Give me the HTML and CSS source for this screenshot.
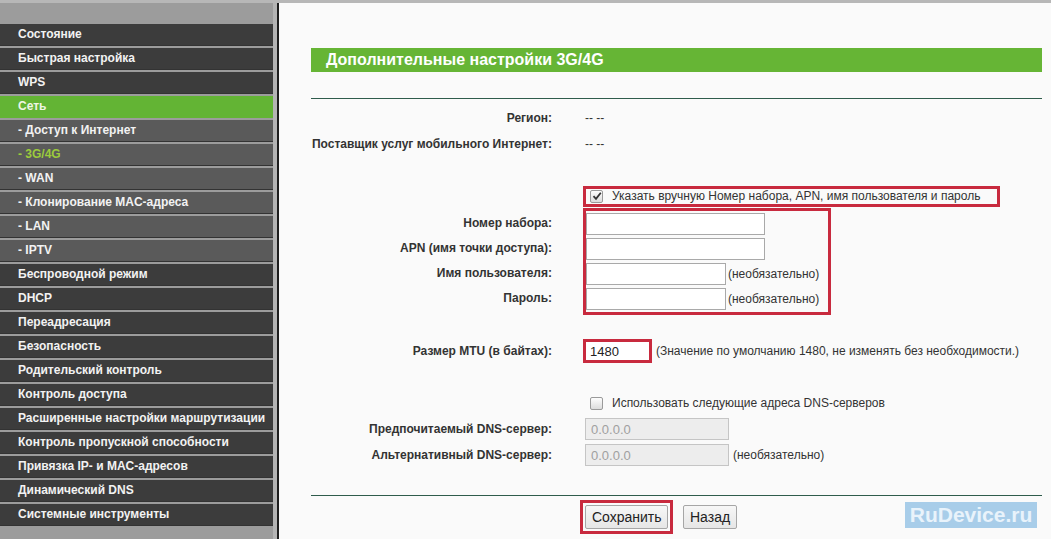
FILE: index.html
```html
<!DOCTYPE html>
<html lang="ru">
<head>
    <meta charset="UTF-8">
    <title>Дополнительные настройки 3G/4G</title>
    <link rel="stylesheet" href="styles.css">
</head>
<body>
    <div class="page">
        <nav class="menu">
            <a class="item">Состояние</a>
            <a class="item">Быстрая настройка</a>
            <a class="item">WPS</a>
            <a class="item active">Сеть</a>
            <a class="item sub">- Доступ к Интернет</a>
            <a class="item sub current">- 3G/4G</a>
            <a class="item sub">- WAN</a>
            <a class="item sub">- Клонирование MAC-адреса</a>
            <a class="item sub">- LAN</a>
            <a class="item sub">- IPTV</a>
            <a class="item">Беспроводной режим</a>
            <a class="item">DHCP</a>
            <a class="item">Переадресация</a>
            <a class="item">Безопасность</a>
            <a class="item">Родительский контроль</a>
            <a class="item">Контроль доступа</a>
            <a class="item">Расширенные настройки маршрутизации</a>
            <a class="item">Контроль пропускной способности</a>
            <a class="item">Привязка IP- и MAC-адресов</a>
            <a class="item">Динамический DNS</a>
            <a class="item">Системные инструменты</a>
        </nav>

        <main class="content">
            <h1 class="title">Дополнительные настройки 3G/4G</h1>
            <div class="rule"></div>

            <div class="row">
                <span class="label">Регион:</span>
                <span class="value">-- --</span>
            </div>
            <div class="row">
                <span class="label">Поставщик услуг мобильного Интернет:</span>
                <span class="value">-- --</span>
            </div>

            <div class="row spaced">
                <span class="label"></span>
                <span class="value">
                    <span class="mark check-mark">
                        <span class="box checked">
                            <svg width="10" height="10" viewBox="0 0 10 10"><path d="M1.5 5.2 L4 7.8 L8.8 1.8" fill="none" stroke="#333" stroke-width="1.8"/></svg>
                        </span>
                        Указать вручную Номер набора, APN, имя пользователя и пароль
                    </span>
                </span>
            </div>

            <div class="group">
                <div class="labels">
                    <span class="label">Номер набора:</span>
                    <span class="label">APN (имя точки доступа):</span>
                    <span class="label">Имя пользователя:</span>
                    <span class="label">Пароль:</span>
                </div>
                <div class="mark fields">
                    <div class="field"><input class="text wide" type="text"></div>
                    <div class="field"><input class="text wide" type="text"></div>
                    <div class="field"><input class="text" type="text"><span class="note">(необязательно)</span></div>
                    <div class="field"><input class="text" type="password"><span class="note">(необязательно)</span></div>
                </div>
            </div>

            <div class="row mtu">
                <span class="label">Размер MTU (в байтах):</span>
                <span class="value">
                    <input class="text mtu-input" type="text" value="1480">
                    <span class="note">(Значение по умолчанию 1480, не изменять без необходимости.)</span>
                </span>
            </div>

            <div class="row dns">
                <span class="label"></span>
                <span class="value"><span class="box"></span>Использовать следующие адреса DNS-серверов</span>
            </div>
            <div class="row">
                <span class="label">Предпочитаемый DNS-сервер:</span>
                <span class="value"><input class="text dns-input" type="text" value="0.0.0.0" disabled></span>
            </div>
            <div class="row">
                <span class="label">Альтернативный DNS-сервер:</span>
                <span class="value"><input class="text dns-input" type="text" value="0.0.0.0" disabled><span class="note">(необязательно)</span></span>
            </div>

            <div class="rule bottom"></div>

            <div class="buttons">
                <span class="save-mark"><button class="btn save">Сохранить</button></span>
                <button class="btn">Назад</button>
            </div>

            <div class="watermark">RuDevice.ru</div>
        </main>
    </div>
</body>
</html>
```

FILE: styles.css
```css
body {
    margin: 0;
    border-top: 3px solid #b7b7b7;
    background: #fafafa;
    font-family: "Liberation Sans", Arial, sans-serif;
    font-size: 12px;
    color: #333;
}
.page {
    display: flex;
    height: 536px;
    overflow: hidden;
}
.menu {
    width: 273px;
    flex-shrink: 0;
    background: #9c9c9c;
    border-right: 4px solid #b4b4b4;
    padding-top: 21px;
    display: flex;
    flex-direction: column;
}
.item {
    height: 21px;
    line-height: 21px;
    margin-bottom: 2px;
    border-bottom: 1px solid #333;
    padding-left: 18px;
    background: #3c3c3c;
    color: #f2f2f2;
    font-weight: bold;
    white-space: nowrap;
}
.item.sub {
    background: #5a5a5a;
}
.item.active {
    background: #63b434;
    border-bottom-color: #63b434;
    color: #eef6e4;
}
.item.current {
    color: #9ccb3c;
}
.content {
    flex: 1;
    position: relative;
    border-left: 2px solid #1e1e1e;
    padding: 45px 9px 0 32px;
}
.title {
    margin: 0;
    height: 24px;
    line-height: 24px;
    padding-left: 15px;
    background: #66b535;
    color: #fff;
    font-size: 16px;
    font-weight: bold;
}
.rule {
    margin-top: 26px;
    border-top: 1px solid #2f5c4c;
    margin-bottom: 6px;
}
.rule.bottom {
    margin-top: 27px;
    margin-bottom: 4px;
}
.row {
    display: grid;
    grid-template-columns: 241px 1fr;
    column-gap: 33px;
    align-items: center;
    height: 26px;
}
.label {
    text-align: right;
    font-weight: bold;
    white-space: nowrap;
}
.value {
    display: flex;
    align-items: center;
    white-space: nowrap;
}
.row.spaced {
    margin-top: 26px;
}
.mark {
    border: 3px solid #c82a3e;
}
.check-mark {
    display: flex;
    align-items: center;
    margin-left: -2px;
    height: 15px;
    padding: 0 11px 0 4px;
    width: 396px;
}
.box {
    display: inline-flex;
    align-items: center;
    justify-content: center;
    width: 11px;
    height: 11px;
    margin-right: 9px;
    border: 1px solid #9a9a9a;
    border-radius: 2px;
    background: linear-gradient(#fdfdfd, #dcdcdc);
}
.dns .box {
    margin-left: 5px;
}
.group {
    display: grid;
    grid-template-columns: 241px auto;
    column-gap: 31px;
    margin-top: -1px;
    justify-content: start;
}
.labels {
    display: flex;
    flex-direction: column;
    padding-top: 3px;
}
.labels .label {
    height: 25px;
    line-height: 25px;
}
.fields {
    width: 242px;
    padding: 0 0 1px 0;
}
.field {
    display: flex;
    align-items: center;
    height: 25px;
}
.text {
    box-sizing: border-box;
    height: 22px;
    width: 140px;
    margin: 0;
    padding: 0 5px;
    border: 1px solid #a9a9a9;
    background: #fff;
    font-family: inherit;
    font-size: 13px;
    color: #222;
}
.text.wide {
    width: 179px;
}
.note {
    margin-left: 4px;
    white-space: nowrap;
}
.fields .note {
    margin-left: 2px;
}
.row.mtu {
    margin-top: 23px;
}
.mtu-input {
    width: 69px;
    height: 24px;
    margin-left: -2px;
    border: 3px solid #c82a3e;
    padding: 0 4px;
}
.row.dns {
    margin-top: 26px;
}
.dns-input {
    width: 144px;
    background: #ededed;
    color: #a0a0a0;
    border-color: #c5c5c5;
}
.buttons {
    display: flex;
    align-items: center;
    padding-left: 269px;
}
.save-mark {
    border: 3px solid #c82a3e;
    padding: 2px;
    margin-right: 10px;
}
.btn {
    height: 24px;
    padding: 0 6px;
    border: 1px solid #a6a6a6;
    border-radius: 2px;
    background: linear-gradient(#f7f7f7, #e6e6e6);
    font-family: inherit;
    font-size: 14px;
    color: #222;
}
.save {
    width: 83px;
}
.watermark {
    position: absolute;
    left: 626px;
    top: 499px;
    width: 132px;
    height: 26px;
    line-height: 26px;
    background: #a8cde9;
    color: #e9f3fb;
    font-size: 21px;
    font-weight: bold;
    text-align: center;
}
```
